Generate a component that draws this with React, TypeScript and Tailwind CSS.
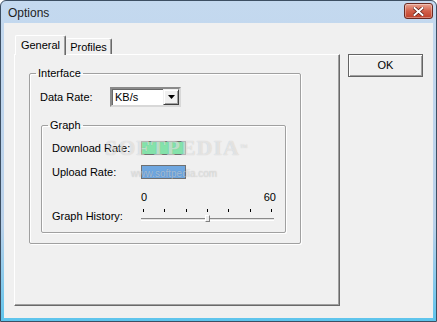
import React from "react";

function GroupBox({
  title,
  className,
  children,
}: {
  title: string;
  className?: string;
  children: React.ReactNode;
}) {
  return (
    <fieldset
      className={`border border-[#a0a0a0] shadow-[inset_1px_1px_0_#ffffff,1px_1px_0_#ffffff] rounded-[2px] p-0 min-w-0 ${className ?? ""}`}
    >
      <legend className="ml-[6px] px-[2px] leading-[13px]">{title}</legend>
      {children}
    </fieldset>
  );
}

function Swatch({ color }: { color: string }) {
  return <div className={`w-[45px] h-[14px] border border-[#707070] ${color}`} />;
}

export default function App() {
  const ticks = [0, 1, 2, 3, 4, 5, 6];
  return (
    <div className="relative w-[437px] h-[322px] flex flex-col border border-[#3d4f63] rounded-t-[6px] bg-gradient-to-b from-[#c4d9ef] via-[#b9d1ea] via-70% to-[#5cc4ec] px-[3px] pb-[3px] font-['Liberation_Sans',Arial,sans-serif] text-[11px] leading-[13px] text-black overflow-hidden">
      {/* title bar */}
      <div className="h-[22px] flex justify-between">
        <span className="pl-[4px] pt-[5px] text-[12px] leading-[15px] text-[#1e1e1e]">Options</span>
        <div className="mt-[2px] w-[29px] h-[16px] rounded-[3px] border border-[#6b2a22] bg-gradient-to-b from-[#e8a493] via-[#d2604a] to-[#c0402a] flex items-center justify-center shadow-[inset_0_0_0_1px_rgba(255,255,255,0.35)]">
          <svg width="11" height="9" viewBox="0 0 11 9">
            <path d="M1.5 1 L9.5 8 M9.5 1 L1.5 8" stroke="#5a1a12" strokeWidth="3.4" strokeLinecap="square" />
            <path d="M1.5 1 L9.5 8 M9.5 1 L1.5 8" stroke="#ffffff" strokeWidth="2" strokeLinecap="square" />
          </svg>
        </div>
      </div>

      {/* client area */}
      <div className="flex-1 bg-[#f0f0f0] flex pt-[12px] pl-[10px]">
        <div className="w-[326px] flex flex-col">
          {/* tabs */}
          <div className="flex items-end h-[19px] pl-[1px]">
            <div className="relative z-10 w-[51px] h-[20px] -mb-[1px] bg-[#f0f0f0] border-t border-l border-white border-r border-r-[#696969] rounded-t-[2px] shadow-[inset_-1px_0_0_#a0a0a0] flex justify-center pt-[3px]">
              General
            </div>
            <div className="w-[46px] h-[16px] border-t border-white border-r border-r-[#696969] rounded-t-[2px] shadow-[inset_-1px_0_0_#a0a0a0] flex justify-center pt-[2px]">
              Profiles
            </div>
          </div>

          {/* tab pane */}
          <div className="h-[252px] border-t border-l border-white border-r border-b border-r-[#696969] border-b-[#696969] shadow-[inset_-1px_-1px_0_#a0a0a0] pl-[14px] pt-[12px]">
            <GroupBox title="Interface" className="w-[272px]">
              <div className="flex items-center mt-[7px] pl-[10px]">
                <span className="w-[70px]">Data Rate:</span>
                <div className="w-[71px] h-[20px] bg-white border-2 border-t-[#8a8a8a] border-l-[#8a8a8a] border-r-[#d8d8d8] border-b-[#d8d8d8] shadow-[inset_1px_1px_0_#696969] flex items-center">
                  <span className="flex-1 pl-[3px] pt-[1px]">KB/s</span>
                  <div className="w-[16px] h-[16px] bg-[#f0f0f0] border border-t-[#f0f0f0] border-l-[#f0f0f0] border-r-[#404040] border-b-[#404040] shadow-[inset_1px_1px_0_#ffffff,inset_-1px_-1px_0_#a0a0a0] flex items-center justify-center">
                    <svg width="7" height="4" viewBox="0 0 7 4">
                      <path d="M0 0 H7 L3.5 4 Z" fill="#000" />
                    </svg>
                  </div>
                </div>
              </div>

              <GroupBox title="Graph" className="w-[245px] ml-[11px] mt-[12px] mb-[10px]">
                <div className="pl-[10px] pb-[9px]">
                  <div className="flex items-center mt-[8px]">
                    <span className="w-[89px] pt-[2px]">Download Rate:</span>
                    <Swatch color="bg-[#84e2aa]" />
                  </div>
                  <div className="flex items-center mt-[9px]">
                    <span className="w-[89px] pt-[2px]">Upload Rate:</span>
                    <Swatch color="bg-[#6fa7e0]" />
                  </div>
                  <div className="flex items-end mt-[12px]">
                    <span className="w-[89px]">Graph History:</span>
                    <div className="w-[133px] flex flex-col">
                      <div className="flex justify-between -mr-[2px]">
                        <span>0</span>
                        <span>60</span>
                      </div>
                      <div className="flex justify-between px-[2px] mt-[5px]">
                        {ticks.map((t) => (
                          <div key={t} className="w-[1px] h-[3px] bg-black" />
                        ))}
                      </div>
                      <div className="relative h-[8px] mt-[3px]">
                        <div className="absolute left-0 right-0 top-[3px] h-[3px] bg-[#e3e3e3] border-t border-[#8a8a8a] shadow-[inset_0_-1px_0_#ffffff]" />
                        <div className="absolute left-[64px] top-0 w-[5px] h-[7px] bg-[#ececec] border border-t-white border-l-white border-r-[#808080] border-b-[#808080]" />
                      </div>
                    </div>
                  </div>
                </div>
              </GroupBox>
            </GroupBox>
          </div>
        </div>

        {/* OK button */}
        <div className="ml-[8px] mt-[19px] w-[75px] h-[23px] border border-[#646464] bg-[#f0f0f0] shadow-[inset_1px_1px_0_#ffffff,inset_-1px_-1px_0_#a0a0a0] flex items-center justify-center">
          OK
        </div>
      </div>

      {/* watermark */}
      <div className="absolute left-[104px] top-[135px] pointer-events-none font-['Liberation_Serif',serif] font-bold text-[22px] leading-[24px] tracking-[1px] text-white/55 [text-shadow:0_0_1px_rgba(0,0,0,0.22)]">
        SOFTPEDIA<span className="text-[8px] align-top">™</span>
      </div>
      <div className="absolute left-[130px] top-[167px] pointer-events-none text-[10px] leading-[12px] text-white/45 [text-shadow:0_0_1px_rgba(0,0,0,0.25)]">
        www.softpedia.com
      </div>
    </div>
  );
}
